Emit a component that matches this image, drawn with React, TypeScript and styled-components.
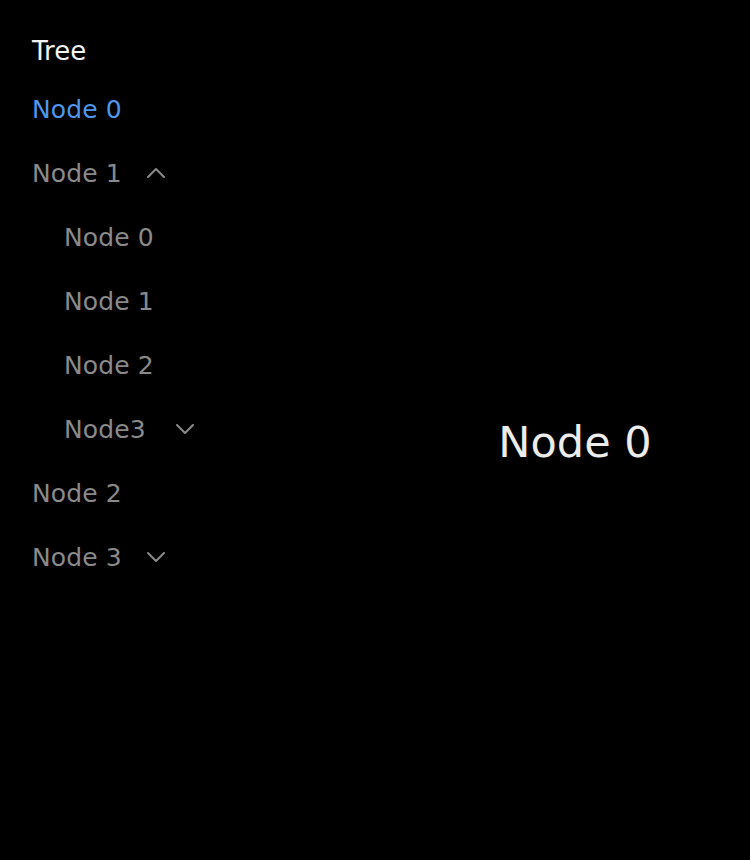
import React, { useState } from "react";
import styled, { createGlobalStyle } from "styled-components";
import { ChevronUp, ChevronDown } from "lucide-react";

const Global = createGlobalStyle`
  html, body { margin: 0; padding: 0; background: #000; }
  body { font-family: "DejaVu Sans", "Noto Sans", sans-serif; }
`;

const Page = styled.div`
  display: flex;
  width: 750px;
  height: 860px;
  background: #000;
`;

const Sidebar = styled.nav`
  width: 400px;
  box-sizing: border-box;
  padding: 25px 0 0 32px;
  display: flex;
  flex-direction: column;
`;

const Title = styled.div`
  height: 52px;
  display: flex;
  align-items: center;
  font-size: 26px;
  color: #f2f2f2;
`;

const List = styled.ul`
  list-style: none;
  margin: 0;
  padding: 0;
`;

const Row = styled.li<{ $depth: number; $active?: boolean }>`
  height: 64px;
  display: flex;
  align-items: center;
  padding-left: ${(p) => p.$depth * 32}px;
  font-size: 25px;
  letter-spacing: 0.1px;
  color: ${(p) => (p.$active ? "#4f97ec" : "#8a8a8a")};
  cursor: pointer;
`;

const Toggle = styled.span<{ $gap: number }>`
  display: inline-flex;
  margin-left: ${(p) => p.$gap}px;
  color: #8a8a8a;
`;

const Main = styled.main`
  flex: 1;
  display: flex;
  align-items: center;
  justify-content: center;
  padding-top: 24px;
  font-size: 43px;
  color: #ececec;
`;

type Item = { label: string; depth: number; toggle?: "up" | "down"; gap?: number; active?: boolean };

const items: Item[] = [
  { label: "Node 0", depth: 0, active: true },
  { label: "Node 1", depth: 0, toggle: "up", gap: 18 },
  { label: "Node 0", depth: 1 },
  { label: "Node 1", depth: 1 },
  { label: "Node 2", depth: 1 },
  { label: "Node3", depth: 1, toggle: "down", gap: 23 },
  { label: "Node 2", depth: 0 },
  { label: "Node 3", depth: 0, toggle: "down", gap: 18 },
];

export default function App() {
  const [selected] = useState("Node 0");
  return (
    <>
      <Global />
      <Page>
        <Sidebar>
          <Title>Tree</Title>
          <List>
            {items.map((it, i) => (
              <Row key={i} $depth={it.depth} $active={it.active}>
                {it.label}
                {it.toggle && (
                  <Toggle $gap={it.gap ?? 18}>
                    {it.toggle === "up" ? (
                      <ChevronUp size={32} strokeWidth={1.5} />
                    ) : (
                      <ChevronDown size={32} strokeWidth={1.5} />
                    )}
                  </Toggle>
                )}
              </Row>
            ))}
          </List>
        </Sidebar>
        <Main>{selected}</Main>
      </Page>
    </>
  );
}
